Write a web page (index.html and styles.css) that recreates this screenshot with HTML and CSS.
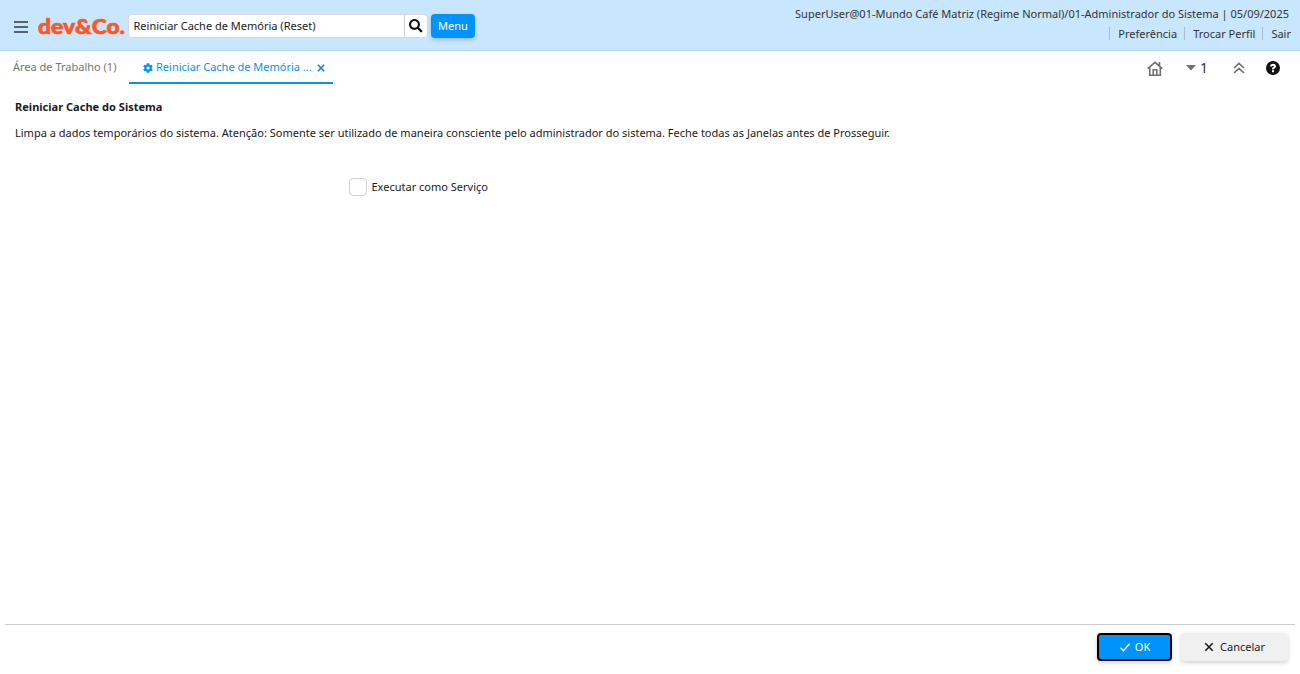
FILE: index.html
```html
<!DOCTYPE html>
<html lang="pt-BR">
<head>
<meta charset="utf-8">
<title>Reiniciar Cache de Memória</title>
<link rel="stylesheet" href="styles.css">
</head>
<body>
<header class="header">
  <svg class="hamburger" viewBox="0 0 14 12"><path d="M0 1h14M0 6h14M0 11h14"/></svg>
  <svg class="logo" viewBox="0 0 88 28"><text x="0" y="19.500" textLength="87" lengthAdjust="spacingAndGlyphs">dev&amp;Co.</text></svg>
  <div class="search">
    <span class="search-text">Reiniciar Cache de Memória (Reset)</span>
    <span class="search-btn"><svg viewBox="0 0 512 512"><path d="M505 442.7L405.300 343c-4.500-4.500-10.600-7-17-7H372c27.600-35.300 44-79.700 44-128C416 93.100 322.900 0 208 0S0 93.100 0 208s93.100 208 208 208c48.300 0 92.700-16.400 128-44v16.300c0 6.400 2.500 12.500 7 17l99.700 99.700c9.400 9.400 24.600 9.400 33.900 0l28.300-28.300c9.400-9.400 9.400-24.600.1-34zM208 336c-70.700 0-128-57.200-128-128 0-70.700 57.200-128 128-128 70.700 0 128 57.200 128 128 0 70.700-57.200 128-128 128z"/></svg></span>
  </div>
  <span class="menu-btn">Menu</span>
  <div class="user">
    <div class="user-info">SuperUser@01-Mundo Café Matriz (Regime Normal)/01-Administrador do Sistema | 05/09/2025</div>
    <div class="links"><a>Preferência</a><a>Trocar Perfil</a><a>Sair</a></div>
  </div>
</header>
<nav class="tabs">
  <div class="tab">Área de Trabalho (1)</div>
  <div class="tab active">
    <svg class="gear" viewBox="0 0 512 512"><path d="M487.400 315.700l-42.600-24.600c4.300-23.200 4.300-47 0-70.200l42.600-24.600c4.900-2.800 7.100-8.600 5.500-14-11.100-35.600-30-67.800-54.700-94.600-3.800-4.100-10-5.100-14.800-2.300L380.800 110c-17.900-15.400-38.500-27.300-60.800-35.100V25.800c0-5.600-3.900-10.500-9.400-11.700-36.700-8.200-74.300-7.800-109.200 0-5.500 1.200-9.400 6.100-9.400 11.700V75c-22.200 7.900-42.800 19.800-60.800 35.100L88.700 85.500c-4.900-2.800-11-1.900-14.800 2.300-24.700 26.700-43.600 58.900-54.700 94.600-1.700 5.400.6 11.200 5.500 14L67.300 221c-4.300 23.200-4.300 47 0 70.200l-42.600 24.600c-4.900 2.800-7.100 8.600-5.500 14 11.100 35.600 30 67.800 54.700 94.600 3.800 4.100 10 5.100 14.800 2.300l42.600-24.600c17.900 15.400 38.500 27.300 60.800 35.100v49.200c0 5.600 3.900 10.500 9.400 11.700 36.700 8.200 74.300 7.800 109.200 0 5.500-1.200 9.400-6.100 9.400-11.700v-49.200c22.200-7.900 42.800-19.800 60.800-35.100l42.600 24.600c4.900 2.800 11 1.900 14.800-2.300 24.700-26.700 43.600-58.900 54.700-94.600 1.500-5.500-.7-11.300-5.600-14.100zM256 336c-44.100 0-80-35.900-80-80s35.900-80 80-80 80 35.900 80 80-35.900 80-80 80z"/></svg>
    <span>Reiniciar Cache de Memória ...</span>
    <svg class="close" viewBox="0 0 8 8"><path d="M.8.8l6.400 6.400M7.200.8L.8 7.200"/></svg>
  </div>
  <div class="tools">
    <svg class="home" viewBox="0 0 16 15"><path d="M.7 7.700L8 1.300l7.300 6.400M2.700 6.500v7.700h10.600V6.500M6.200 14V8.700h3.600V14M12.500 1v4"/></svg>
    <svg class="caret" viewBox="0 0 10 6"><path d="M0 0h10L5 5.500z"/></svg>
    <span class="count">1</span>
    <svg class="chevrons" viewBox="0 0 12 12"><path d="M1 6l5-4.700L11 6M1 11l5-4.700 5 4.700"/></svg>
    <svg class="help" viewBox="0 0 14 14"><circle cx="7" cy="7" r="7"/><path d="M4.900 5.400Q5.300 3.700 7 3.700T9.100 5.300Q9.100 6.200 8 6.700T7 8.300M7 9.300v1.900"/></svg>
  </div>
</nav>
<main class="content">
  <h1>Reiniciar Cache do Sistema</h1>
  <p>Limpa a dados temporários do sistema. Atenção: Somente ser utilizado de maneira consciente pelo administrador do sistema. Feche todas as Janelas antes de Prosseguir.</p>
  <label class="option"><span class="box"></span>Executar como Serviço</label>
</main>
<footer class="footer">
  <span class="btn ok"><svg viewBox="0 0 12 10"><path d="M1.500 5.700L4.500 8.700 10.500 1.700"/></svg>OK</span>
  <span class="btn cancel"><svg viewBox="0 0 10 10"><path d="M1.300 1.300l7.400 7.400M8.700 1.300L1.300 8.700"/></svg>Cancelar</span>
</footer>
</body>
</html>
```
FILE: styles.css
```css
* { box-sizing: border-box; }
body {
  margin: 0;
  height: 674px;
  display: flex;
  flex-direction: column;
  overflow: hidden;
  background: #fff;
  color: #1a1a1a;
  font: 11px/16px "Noto Sans", sans-serif;
}
svg { display: block; flex: none; fill: none; }
.header {
  height: 51px;
  flex: none;
  display: flex;
  align-items: flex-start;
  background: #c8e7ff;
  border-bottom: 1px solid #a9dbff;
}
.hamburger { width: 14px; height: 12px; margin: 21px 0 0 14px; stroke: #56646e; stroke-width: 2; }
.logo { width: 88px; height: 28px; margin: 14px 0 0 10px; overflow: visible; }
.logo text { font: 900 21px Lato, sans-serif; fill: #ff5722; stroke: #ff5722; stroke-width: .7; }
.search {
  display: flex;
  width: 300px;
  height: 24px;
  margin: 14px 0 0 2px;
  border: 1px solid #d9d9d9;
  border-radius: 4px;
  background: #fff;
}
.search-text { flex: 1; padding-left: 4.500px; line-height: 22px; }
.search-btn { width: 23px; border-left: 1px solid #d0d0d0; padding: 4px 0 0 4px; }
.search-btn svg { width: 13.500px; height: 13.500px; fill: #111; }
.menu-btn {
  width: 44px;
  height: 24px;
  margin: 14px 0 0 3px;
  border-radius: 4px;
  background: #0093f9;
  color: #fff;
  line-height: 24px;
  text-align: center;
  box-shadow: 0 2px 4px rgba(0, 0, 0, .2);
}
.user { margin-left: auto; padding: 6px 9px 0 0; color: #333; }
.user-info { padding-right: 2px; text-align: right; }
.links { display: flex; justify-content: flex-end; gap: 7px; margin-top: 5px; }
.links a { height: 13px; line-height: 13px; border-left: 1px solid #aebdc8; padding-left: 8px; }
.tabs { display: flex; height: 33px; flex: none; }
.tab { width: 129px; padding: 8px 0 0 13px; color: #757575; }
.active {
  display: flex;
  width: 204px;
  padding: 8px 0 0 14px;
  color: #0093f9;
  border-bottom: 2px solid #0093f9;
}
.gear { width: 10px; height: 10px; margin: 4px 3px 0 0; fill: #0093f9; }
.close { width: 8px; height: 8px; margin: 5px 0 0 5px; stroke: #1976ed; stroke-width: 1.500; }
.tools { display: flex; align-items: center; margin-left: auto; padding: 1px 20px 0 0; }
.home { width: 16px; height: 15px; margin-right: 23.500px; stroke: #707070; stroke-width: 1.600; }
.caret { width: 10px; height: 6px; fill: #707070; }
.count { width: 8px; margin: 0 25px 0 4px; font-size: 14px; color: #333; }
.chevrons { width: 12px; height: 12px; margin-right: 21px; stroke: #707070; stroke-width: 1.700; }
.help { width: 14px; height: 14px; fill: #111; }
.help path { fill: none; stroke: #fff; stroke-width: 2; }
.content { flex: 1; padding: 15px; }
.content h1 { margin: 0 0 10px; font-size: 11px; line-height: 16px; letter-spacing: .02px; }
.content p { margin: 0; white-space: nowrap; }
.option { display: flex; width: max-content; margin: 37px 0 0 334px; line-height: 18px; }
.box { width: 18px; height: 18px; margin-right: 4.500px; border: 1px solid #d0d0d0; border-radius: 4px; }
.footer {
  display: flex;
  justify-content: flex-end;
  height: 50px;
  margin: 0 5px;
  padding: 8px 7px 0 0;
  border-top: 1px solid #ccc;
}
.btn {
  display: flex;
  align-items: center;
  justify-content: center;
  height: 28px;
  border-radius: 4px;
  box-shadow: 0 2px 4px rgba(0, 0, 0, .18);
}
.ok { width: 75px; margin-right: 9px; gap: 4px; border: 2px solid #000; background: #0093f9; color: #fff; }
.ok svg { width: 12px; height: 10px; stroke: #fff; stroke-width: 1.400; }
.cancel { width: 107px; gap: 6px; background: #f0f0f0; }
.cancel svg { width: 10px; height: 10px; stroke: #1a1a1a; stroke-width: 1.600; }
```
